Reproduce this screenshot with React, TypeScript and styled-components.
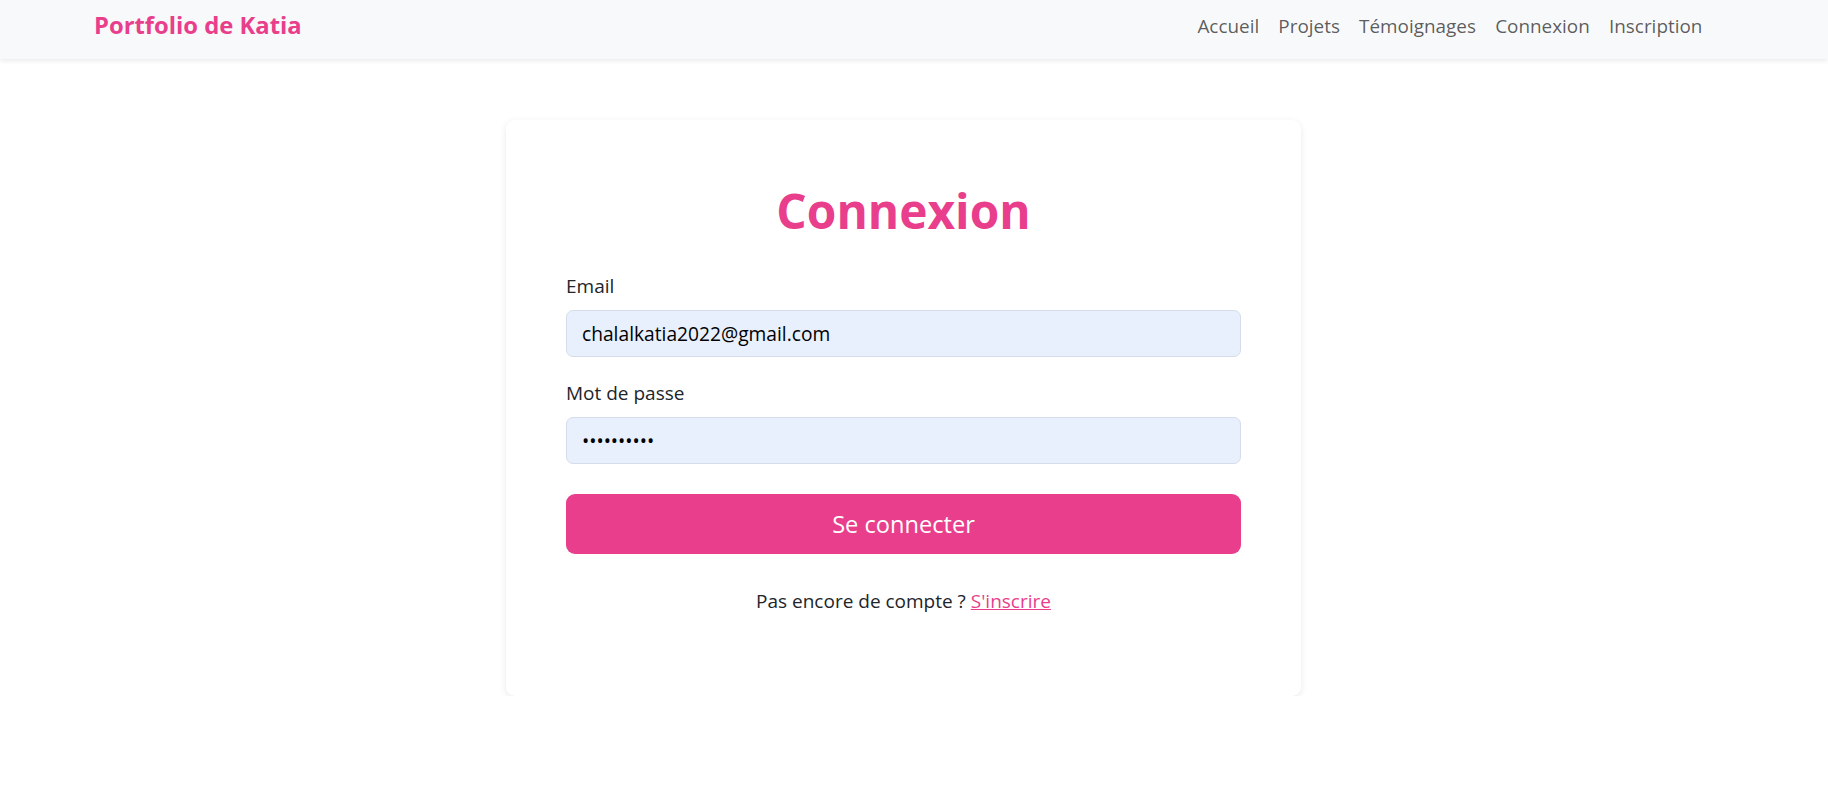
import React from "react";
import styled, { createGlobalStyle } from "styled-components";

const GlobalStyle = createGlobalStyle`
  *, *::before, *::after { box-sizing: border-box; }
  body {
    margin: 0;
    background: #ffffff;
    color: #212529;
    font-family: "Open Sans", "Noto Sans", sans-serif;
    font-size: 19px;
    line-height: 1.5;
  }
`;

const Navbar = styled.header`
  height: 59px;
  background: #f8f9fa;
  box-shadow: 0 2px 5px rgba(0, 0, 0, 0.08);
  display: flex;
  align-items: center;
  justify-content: space-between;
  padding: 0 116px 7px 94px;
`;

const Brand = styled.a`
  color: #e83e8c;
  font-weight: 700;
  font-size: 23.8px;
  text-decoration: none;
  line-height: 1.5;
`;

const NavList = styled.nav`
  display: flex;
  align-items: center;
`;

const NavLink = styled.a`
  color: rgba(0, 0, 0, 0.65);
  font-size: 18.9px;
  padding: 0 9.6px;
  text-decoration: none;
`;

const Main = styled.main`
  display: flex;
  justify-content: center;
  padding: 61px 21px 0 0;
`;

const Card = styled.section`
  width: 795px;
  padding: 62px 60px 61px;
  background: #fff;
  border-radius: 9px;
  box-shadow: 0 2px 7px rgba(0, 0, 0, 0.09);
  display: flex;
  flex-direction: column;
`;

const Title = styled.h1`
  margin: 0 0 34px;
  text-align: center;
  color: #e83e8c;
  font-size: 47.8px;
  font-weight: 700;
  line-height: 1.2;
`;

const Field = styled.div<{ $gap: number }>`
  display: flex;
  flex-direction: column;
  margin-bottom: ${(p) => p.$gap}px;
`;

const Label = styled.label`
  font-size: 19px;
  line-height: 27px;
  margin-bottom: 10px;
  color: #212529;
`;

const Input = styled.input`
  height: 47px;
  width: 100%;
  padding: 0 15px;
  border: 1px solid #d6dde8;
  border-radius: 7px;
  background: #e8f0fe;
  color: #000;
  font-family: inherit;
  font-size: 19.2px;
  outline: none;
`;

const Button = styled.button`
  height: 60px;
  width: 100%;
  border: none;
  border-radius: 9px;
  background: #e83e8c;
  color: #fff;
  font-family: inherit;
  font-size: 23.6px;
  cursor: pointer;
  margin: 0 0 34px;
`;

const Footer = styled.p`
  margin: 0 0 20px;
  text-align: center;
  font-size: 19px;
  line-height: 27px;
`;

const Link = styled.a`
  color: #e83e8c;
  text-decoration: underline;
`;

export default function App() {
  return (
    <>
      <GlobalStyle />
      <Navbar>
        <Brand href="#">Portfolio de Katia</Brand>
        <NavList>
          <NavLink href="#">Accueil</NavLink>
          <NavLink href="#">Projets</NavLink>
          <NavLink href="#">Témoignages</NavLink>
          <NavLink href="#">Connexion</NavLink>
          <NavLink href="#">Inscription</NavLink>
        </NavList>
      </Navbar>
      <Main>
        <Card>
          <Title>Connexion</Title>
          <Field $gap={23}>
            <Label htmlFor="email">Email</Label>
            <Input id="email" type="email" readOnly defaultValue="chalalkatia2022@gmail.com" />
          </Field>
          <Field $gap={30}>
            <Label htmlFor="pw">Mot de passe</Label>
            <Input id="pw" type="password" readOnly defaultValue="katia12345" />
          </Field>
          <Button type="button">Se connecter</Button>
          <Footer>
            Pas encore de compte ? <Link href="#">S'inscrire</Link>
          </Footer>
        </Card>
      </Main>
    </>
  );
}
